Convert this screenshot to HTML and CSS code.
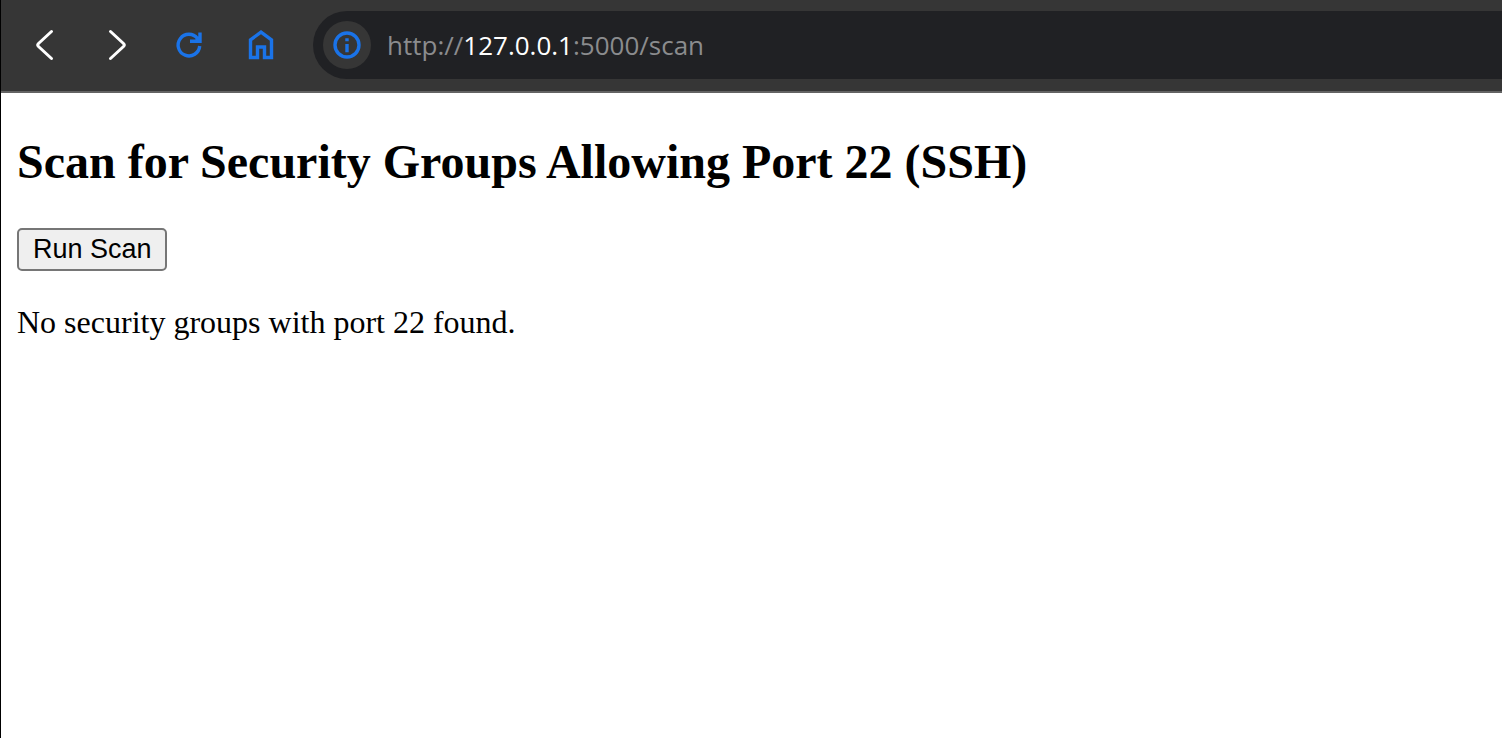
FILE: index.html
```html
<!DOCTYPE html>
<html lang="en">
<head>
<meta charset="utf-8">
<title>Security Group Scan</title>
<link rel="stylesheet" href="styles.css">
</head>
<body>
<div class="browser">
  <header class="toolbar">
    <nav class="nav">
      <button class="nav-button" type="button" aria-label="Back">
        <svg class="icon icon-light" viewBox="0 0 36 36"><path d="M24.500 4.500L11.500 16.500Q10 18 11.500 19.500L24.500 31.500"/></svg>
      </button>
      <button class="nav-button" type="button" aria-label="Forward">
        <svg class="icon icon-light" viewBox="0 0 36 36"><path d="M11.500 4.500L24.500 16.500Q26 18 24.500 19.500L11.500 31.500"/></svg>
      </button>
      <button class="nav-button" type="button" aria-label="Reload">
        <svg class="icon icon-blue" viewBox="0 0 36 36"><path d="M28.700 19A10.800 10.800 0 1 1 26.500 11.500L28.500 14"/><path d="M29 5.500V14.300H19"/><path class="fill" d="M24 13L29 8V14H23Z"/></svg>
      </button>
      <button class="nav-button" type="button" aria-label="Home">
        <svg class="icon icon-blue" viewBox="0 0 36 36"><path d="M7.500 30.500V12.800L18 5.200L28.500 12.800V30.500H21.500V20H14.500V30.500Z"/></svg>
      </button>
    </nav>
    <div class="address">
      <button class="site-info" type="button" aria-label="View site information">
        <svg class="icon icon-blue" viewBox="0 0 36 36"><circle cx="18" cy="18" r="12"/><path d="M18 17V25.200M18 11.300V14.300"/></svg>
      </button>
      <div class="url" role="textbox" contenteditable="true" spellcheck="false" aria-label="Address">http://<span class="host">127.0.0.1</span>:5000/scan</div>
    </div>
  </header>
  <main class="page">
    <h2 class="title">Scan for Security Groups Allowing Port 22 (SSH)</h2>
    <form class="scan-form">
      <button class="scan-button" type="submit">Run Scan</button>
    </form>
    <p class="result">No security groups with port 22 found.</p>
  </main>
</div>
</body>
</html>
```
FILE: styles.css
```css
* {
  box-sizing: border-box;
}

body {
  margin: 0;
  background: #fff;
}

.browser {
  min-height: 100vh;
  border-left: 1px solid #000;
}

.toolbar {
  display: flex;
  align-items: center;
  gap: 16px;
  padding: 11px 0 12px 8px;
  background: #363636;
  border-bottom: 2px solid #636363;
}

.nav {
  display: flex;
}

.nav-button {
  display: flex;
  align-items: center;
  justify-content: center;
  width: 72px;
  height: 68px;
  padding: 0;
  border: 0;
  background: none;
}

.icon {
  width: 36px;
  height: 36px;
  fill: none;
  stroke-width: 3;
}

.icon-light {
  stroke: #fff;
  stroke-linecap: round;
}

.icon-blue {
  stroke: #1a73e8;
  stroke-width: 3.4;
}

.fill {
  fill: #1a73e8;
  stroke: none;
}

.address {
  display: flex;
  flex: 1;
  align-items: center;
  gap: 16px;
  height: 68px;
  padding-left: 10px;
  border-radius: 34px 0 0 34px;
  background: #202124;
}

.site-info {
  display: flex;
  align-items: center;
  justify-content: center;
  width: 48px;
  height: 48px;
  padding: 0;
  border: 0;
  border-radius: 50%;
  background: #363636;
}

.url {
  flex: 1;
  color: #8b8c8e;
  font: 26px/36px "Open Sans", "Noto Sans", sans-serif;
  white-space: nowrap;
  outline: 0;
}

.host {
  color: #fff;
}

.page {
  padding: 41px 16px;
  color: #000;
  font-family: "Liberation Serif", "Times New Roman", serif;
}

.title {
  margin: 0 0 39px;
  font-size: 48px;
  line-height: 55px;
}

.scan-form {
  margin: 0 0 33px;
}

.scan-button {
  display: block;
  height: 43px;
  padding: 0 13px 2px 14px;
  border: 2px solid #767676;
  border-radius: 5px;
  background: #efefef;
  color: #000;
  font: 27px/36px "Liberation Sans", Arial, sans-serif;
}

.result {
  margin: 0;
  font-size: 32px;
  line-height: 37px;
}
```
